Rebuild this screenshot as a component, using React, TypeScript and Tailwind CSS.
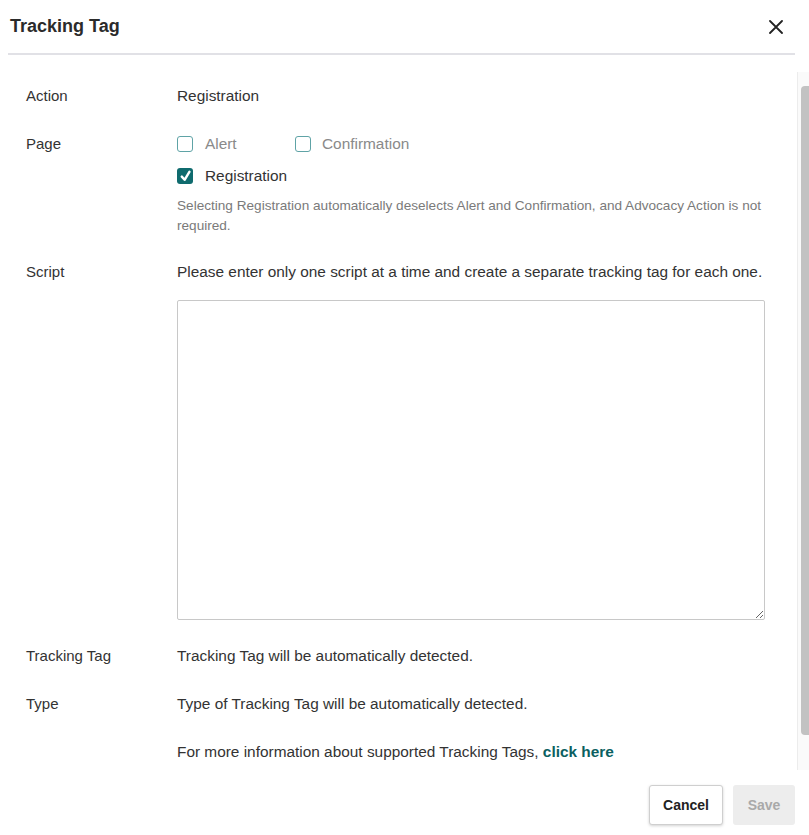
const Checkbox = ({ checked }: { checked?: boolean }) =>
    checked ? (
        <span className="flex h-4 w-4 items-center justify-center rounded-[3px] bg-[#0f6b6e]">
            <svg width="11" height="12" viewBox="0 0 11 12">
                <path d="M1.8 6.6 L4.6 9.8 L9.4 1.8" fill="none" stroke="#fff" strokeWidth="2.4" strokeLinecap="round" strokeLinejoin="round" />
            </svg>
        </span>
    ) : (
        <span className="block h-4 w-4 rounded-[3px] border border-[#5fa3a6] bg-white" />
    )

const Row = ({ label, children }: { label: string; children: React.ReactNode }) => (
    <div className="flex">
        <div className="w-[151px] shrink-0 text-[15px] leading-6 text-[#333]">{label}</div>
        <div className="flex-1 text-[15.4px]">{children}</div>
    </div>
)

const App = () => {
    return (
        <div className="h-[835px] w-[809px] bg-white text-[15px] text-[#333]" style={{ fontFamily: '"Liberation Sans", Arial, sans-serif' }}>
            {/* Header */}
            <div className="flex h-[53px] items-center justify-between pl-[10px] pr-[26px]">
                <h2 className="text-[18px] font-bold text-[#2b2b2b]">Tracking Tag</h2>
                <svg width="14" height="14" viewBox="0 0 14 14">
                    <path d="M1 1 L13 13 M13 1 L1 13" stroke="#222" strokeWidth="1.8" strokeLinecap="round" />
                </svg>
            </div>
            <div className="ml-[8px] mr-[14px] h-[2px] bg-[#e1e1e6]" />

            {/* Body */}
            <div className="mt-[17px] flex h-[698px]">
                <div className="flex-1 pl-[26px] pr-[32px] pt-[12px]">
                    <Row label="Action">
                        <div className="leading-6">Registration</div>
                    </Row>

                    <div className="mt-6">
                        <Row label="Page">
                            <div className="flex items-center leading-6">
                                <label className="flex w-[118px] items-center">
                                    <Checkbox />
                                    <span className="ml-3 text-[#8a8a8a]">Alert</span>
                                </label>
                                <label className="flex items-center">
                                    <Checkbox />
                                    <span className="ml-[11px] text-[#8a8a8a]">Confirmation</span>
                                </label>
                            </div>
                            <label className="mt-2 flex items-center leading-6">
                                <Checkbox checked />
                                <span className="ml-3">Registration</span>
                            </label>
                            <p className="mt-2 text-[13.6px] leading-5 text-[#7a7a7a]">
                                Selecting Registration automatically deselects Alert and Confirmation, and Advocacy Action is not required.
                            </p>
                        </Row>
                    </div>

                    <div className="mt-6">
                        <Row label="Script">
                            <div className="leading-6">Please enter only one script at a time and create a separate tracking tag for each one.</div>
                            <textarea className="mt-4 block h-[320px] w-full resize-y rounded-[2px] border border-[#c8c8c8] bg-white outline-none" />
                        </Row>
                    </div>

                    <div className="mt-6">
                        <Row label="Tracking Tag">
                            <div className="leading-6">Tracking Tag will be automatically detected.</div>
                        </Row>
                    </div>

                    <div className="mt-6">
                        <Row label="Type">
                            <div className="leading-6">Type of Tracking Tag will be automatically detected.</div>
                            <div className="mt-6 leading-6">
                                For more information about supported Tracking Tags, <a className="font-bold text-[#0b5f61]">click here</a>
                            </div>
                        </Row>
                    </div>
                </div>

                {/* Scrollbar */}
                <div className="w-[12px] border-l border-[#ececec] bg-[#fafafa] pl-[3px] pt-[14px]">
                    <div className="h-[649px] rounded-l-[4px] bg-[#c2c2c2]" />
                </div>
            </div>

            {/* Footer */}
            <div className="mt-[15px] flex justify-end gap-[10px] pr-[14px]">
                <button className="h-10 w-[74px] rounded-[3px] border border-[#cfcfcf] bg-white text-[14px] font-bold text-[#222] shadow-[0_1px_3px_rgba(0,0,0,0.18)]">
                    Cancel
                </button>
                <button className="h-10 w-[62px] rounded-[3px] bg-[#ededed] text-[14px] font-bold text-[#a9a9a9]">Save</button>
            </div>
        </div>
    )
}
export default App
